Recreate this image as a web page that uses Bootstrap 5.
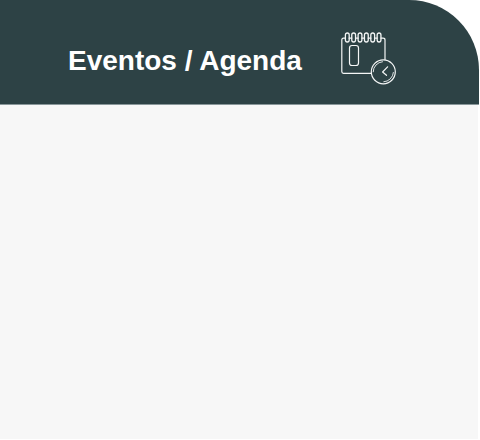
<!DOCTYPE html>
<html lang="pt">
<head>
<meta charset="utf-8">
<meta name="viewport" content="width=device-width, initial-scale=1">
<title>Eventos / Agenda</title>
<link href="https://cdn.jsdelivr.net/npm/bootstrap@5.3.0/dist/css/bootstrap.min.css" rel="stylesheet">
<style>
body { background: #fff; font-family: "Liberation Sans", Arial, sans-serif; }
.agenda { padding: 0 1px 1px 0; }
.agenda-head { background: #2d4245; height: 105px; border-bottom: 1px solid #89979a; border-top-right-radius: 70px; padding-left: 68px; gap: 38px; }
.agenda-title { font-size: 28px; line-height: 32px; padding-top: 17px; }
.agenda-icon { margin-top: 12px; }
.agenda-body { background: #f7f7f7; margin-right: 1px; }
</style>
</head>
<body>
<main class="agenda d-flex flex-column min-vh-100">
  <header class="agenda-head d-flex align-items-center text-white">
    <h1 class="agenda-title fw-bold text-nowrap m-0">Eventos / Agenda</h1>
    <svg class="agenda-icon flex-shrink-0" width="58" height="56" viewBox="0 0 58 56" fill="none" stroke="#f4f6f6" stroke-width="1.2" stroke-linecap="round" stroke-linejoin="round" aria-hidden="true">
      <path d="M5 8.200H3.500Q1.800 8.200 1.800 10V41.500Q1.800 43.300 3.500 43.300H31M41 8.200H43Q45 8.200 45 10V29.500"/>
      <g stroke-width="1.300">
        <rect x="5.400" y="3" width="3.800" height="9" rx="1.900"/>
        <rect x="11.750" y="3" width="3.800" height="9" rx="1.900"/>
        <rect x="18.100" y="3" width="3.800" height="9" rx="1.900"/>
        <rect x="24.450" y="3" width="3.800" height="9" rx="1.900"/>
        <rect x="30.800" y="3" width="3.800" height="9" rx="1.900"/>
        <rect x="37.150" y="3" width="3.800" height="9" rx="1.900"/>
        <path d="M9.200 8.200h2.500M15.600 8.200h2.500M21.900 8.200h2.500M28.300 8.200h2.500M34.600 8.200h2.500"/>
      </g>
      <rect x="9.500" y="15.500" width="9" height="20" rx="2.500"/>
      <circle cx="43.300" cy="41.800" r="12"/>
      <path stroke-width=".9" d="M33.200 41.800A10.100 10.100 0 0 1 42.500 31.700M53.400 42.500A10.100 10.100 0 0 1 43.800 51.800"/>
      <path d="M47.600 36.800L42.600 42L46.500 45.300"/>
    </svg>
  </header>
  <section class="agenda-body flex-grow-1" aria-label="Agenda"></section>
</main>
<script src="https://cdn.jsdelivr.net/npm/bootstrap@5.3.0/dist/js/bootstrap.bundle.min.js"></script>
</body>
</html>
